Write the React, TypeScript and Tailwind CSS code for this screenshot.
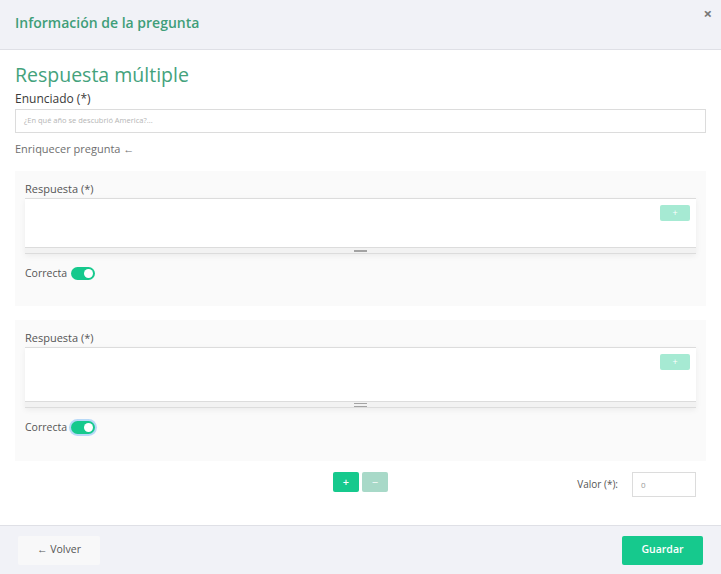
import React from 'react'

function Editor({ handle }: { handle: 'single' | 'double' }) {
  const tall = handle === 'single'
  return (
    <div className="mx-[10px] shadow-[0_2px_6px_rgba(0,0,0,0.06)]">
      <div className={`relative bg-white border-t border-[#dcdcdc] ${tall ? 'h-[49px]' : 'h-[54px]'}`}>
        <button className="absolute right-[6px] top-[6px] w-[30px] h-[16px] rounded-[2px] bg-[#a6ead3] text-white text-[9px] leading-[16px] text-center">
          +
        </button>
      </div>
      <div className="h-[7px] bg-[#f2f2f2] border-t border-b border-[#dcdcdc] flex justify-center items-center">
        {tall ? (
          <div className="w-[13px] h-[2px] bg-[#a3a3a3]" />
        ) : (
          <div className="flex flex-col gap-[2px]">
            <div className="w-[13px] h-[1px] bg-[#a3a3a3]" />
            <div className="w-[13px] h-[1px] bg-[#a3a3a3]" />
          </div>
        )}
      </div>
    </div>
  )
}

function AnswerCard({ focused, handle }: { focused?: boolean; handle: 'single' | 'double' }) {
  return (
    <div className={`bg-[#fafafa] pt-[10px] ${focused ? 'pb-[27px]' : 'pb-[26px]'}`}>
      <div className="px-[10px] text-[11px] text-[#555] leading-[16px] mb-[1px]">Respuesta (*)</div>
      <Editor handle={handle} />
      <div className="px-[10px] mt-[12px] h-[14px] flex items-center gap-[4px]">
        <span className="text-[10.5px] leading-[14px] text-[#555]">Correcta</span>
        <span
          className={`relative inline-block w-[24px] h-[13px] rounded-full bg-[#16c98d] ${
            focused ? 'ring-2 ring-[#b7d9f7]' : ''
          }`}
        >
          <span className="absolute right-[2px] top-[2px] w-[9px] h-[9px] rounded-full bg-white" />
        </span>
      </div>
    </div>
  )
}

export default function App() {
  return (
    <div className="w-[721px] h-[574px] bg-white flex flex-col font-['Open_Sans',sans-serif]">
      <div className="h-[50px] bg-[#f1f2f7] border-b border-[#dfe0e6] flex items-center justify-between pl-[15px] pr-[9px] shrink-0">
        <div className="text-[14px] font-semibold text-[#3f9e79] -mt-[5px]">Información de la pregunta</div>
        <div className="text-[15px] font-bold text-[#777] -mt-[22px]">×</div>
      </div>

      <div className="flex-1 px-[15px] pt-[12px]">
        <div className="text-[19.5px] text-[#44a27c] leading-[26px]">Respuesta múltiple</div>
        <div className="text-[12px] text-[#3a3a3a] leading-[16px] mt-[3px]">Enunciado (*)</div>
        <div className="mt-[2px] h-[24px] border border-[#dcdcdc] flex items-center px-[8px]">
          <span className="text-[7.5px] text-[#b5b5b5]">¿En qué año se descubrió America?...</span>
        </div>
        <div className="mt-[8px] text-[11px] text-[#6f6f6f] leading-[16px]">Enriquecer pregunta ←</div>

        <div className="mt-[14px]">
          <AnswerCard handle="single" />
        </div>
        <div className="mt-[14px]">
          <AnswerCard handle="double" focused />
        </div>

        <div className="mt-[11px] grid grid-cols-[1fr_auto_1fr] items-start">
          <div />
          <div className="flex gap-[3px]">
            <button className="w-[26px] h-[20px] rounded-[2px] bg-[#16c98d] text-white text-[11px] font-semibold leading-[20px]">
              +
            </button>
            <button className="w-[26px] h-[20px] rounded-[2px] bg-[#a8d9c8] text-white text-[11px] leading-[20px]">
              −
            </button>
          </div>
          <div className="flex items-center justify-end gap-[14px] mr-[10px]">
            <span className="text-[10px] text-[#555]">Valor (*):</span>
            <div className="w-[64px] h-[25px] border border-[#dcdcdc] flex items-center px-[8px]">
              <span className="text-[8px] text-[#999]">0</span>
            </div>
          </div>
        </div>
      </div>

      <div className="h-[49px] bg-[#f1f2f7] border-t border-[#dfe0e6] flex items-center justify-between pl-[18px] pr-[18px] shrink-0">
        <button className="w-[82px] h-[29px] bg-[#f8f8f9] text-[10.5px] text-[#555] rounded-[2px]">← Volver</button>
        <button className="w-[81px] h-[29px] bg-[#16c98d] text-[10.5px] font-semibold text-white rounded-[2px]">
          Guardar
        </button>
      </div>
    </div>
  )
}
